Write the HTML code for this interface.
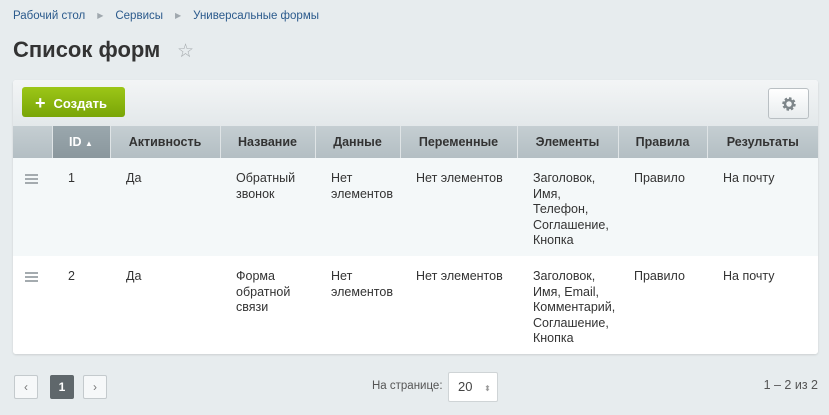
<!DOCTYPE html>
<html><head><meta charset="utf-8"><style>
*{margin:0;padding:0;box-sizing:border-box}
body{width:829px;height:415px;background:#e7ecee;font-family:"Liberation Sans",Arial,sans-serif;position:relative;overflow:hidden;color:#333}
.bc{position:absolute;top:10px;left:13px;font-size:11.5px;color:#2b5a8c}
.bc span.s{color:#a0a8ae;font-size:8px;margin:0 12px;position:relative;top:-1px}
h1{position:absolute;top:37px;left:13px;font-size:22px;font-weight:bold;color:#333}
.star{position:absolute;top:40px;left:177px;font-size:19px;color:#a5aaad}
.panel{position:absolute;left:13px;top:80px;width:805px;height:274px;background:#fff;border-radius:3px;box-shadow:0 1px 2px rgba(0,0,0,.12);overflow:hidden}
.tb{height:46px;background:linear-gradient(#f3f5f6,#e3e8ea);position:relative}
.btn{position:absolute;left:9px;top:7px;width:103px;height:30px;border-radius:3px;background:linear-gradient(#9cc617,#79a507);color:#fff;font-weight:bold;font-size:13px;line-height:30px;padding-left:13px}
.btn b{font-size:18px;margin-right:8px;position:relative;top:1px}
.gear{position:absolute;right:9px;top:8px;width:41px;height:31px;border:1px solid #b9bfc3;border-radius:3px;background:linear-gradient(#fff,#e8ecee)}
table{border-collapse:collapse;font-size:12.5px;width:805px;table-layout:fixed}
th{height:32px;background:linear-gradient(#c5ced2,#b3bec3);font-weight:bold;font-size:12.5px;color:#333;border-left:1px solid #dfe4e6;text-align:center}
th.id{background:linear-gradient(#9aa7ad,#8a979d);color:#fff}
td{vertical-align:top;padding:13px 0 0 16px;line-height:15.5px;color:#333}
tr.r1 td{background:#f4f8f9;height:98px}
tr.r2 td{background:#fff;height:98px}
.hm{padding-left:12px!important;padding-top:16px!important}
.hm i{display:block;width:13px;height:2px;background:#a4abaf;margin-bottom:2px}
.pg{position:absolute;top:375px;width:24px;height:24px;border:1px solid #c4cacd;border-radius:2px;background:#f6f8f9;font-size:12px;color:#777;text-align:center;line-height:22px}
</style></head><body>
<div class="bc">Рабочий стол<span class="s">▶</span>Сервисы<span class="s">▶</span>Универсальные формы</div>
<h1>Список форм</h1><div class="star">☆</div>
<div class="panel">
<div class="tb"><div class="btn"><b>+</b>Создать</div><div class="gear"><svg width="41" height="31" viewBox="0 0 41 31"><circle cx="20" cy="15" r="5" fill="none" stroke="#7e868a" stroke-width="3.5" stroke-dasharray="2.2 1.7"/><circle cx="20" cy="15" r="4" fill="none" stroke="#7e868a" stroke-width="2.5"/></svg></div></div>
<table>
<colgroup><col style="width:39px"><col style="width:58px"><col style="width:110px"><col style="width:95px"><col style="width:85px"><col style="width:117px"><col style="width:101px"><col style="width:89px"><col style="width:111px"></colgroup>
<tr><th style="border-left:none"></th><th class="id">ID <span style="font-size:8px">▲</span></th><th>Активность</th><th>Название</th><th>Данные</th><th>Переменные</th><th>Элементы</th><th>Правила</th><th>Результаты</th></tr>
<tr class="r1"><td class="hm"><i></i><i></i><i></i></td><td>1</td><td>Да</td><td>Обратный<br>звонок</td><td>Нет<br>элементов</td><td>Нет элементов</td><td>Заголовок,<br>Имя,<br>Телефон,<br>Соглашение,<br>Кнопка</td><td>Правило</td><td>На почту</td></tr>
<tr class="r2"><td class="hm"><i></i><i></i><i></i></td><td>2</td><td>Да</td><td>Форма<br>обратной<br>связи</td><td>Нет<br>элементов</td><td>Нет элементов</td><td>Заголовок,<br>Имя, Email,<br>Комментарий,<br>Соглашение,<br>Кнопка</td><td>Правило</td><td>На почту</td></tr>
</table></div>
<div class="pg" style="left:14px">‹</div>
<div class="pg" style="left:50px;background:#5f676b;border-color:#5f676b;color:#fff;font-weight:bold">1</div>
<div class="pg" style="left:83px">›</div>
<div style="position:absolute;left:372px;top:380px;font-size:11.5px;color:#555">На странице:</div>
<div style="position:absolute;left:448px;top:372px;width:50px;height:30px;border:1px solid #cfd4d6;border-radius:2px;background:#fff;font-size:13px;color:#444;line-height:28px;padding-left:9px">20 <span style="font-size:8px;color:#999;margin-left:8px">⬍</span></div>
<div style="position:absolute;right:11px;top:378px;font-size:12.5px;color:#555">1 – 2 из 2</div>
</body></html>
